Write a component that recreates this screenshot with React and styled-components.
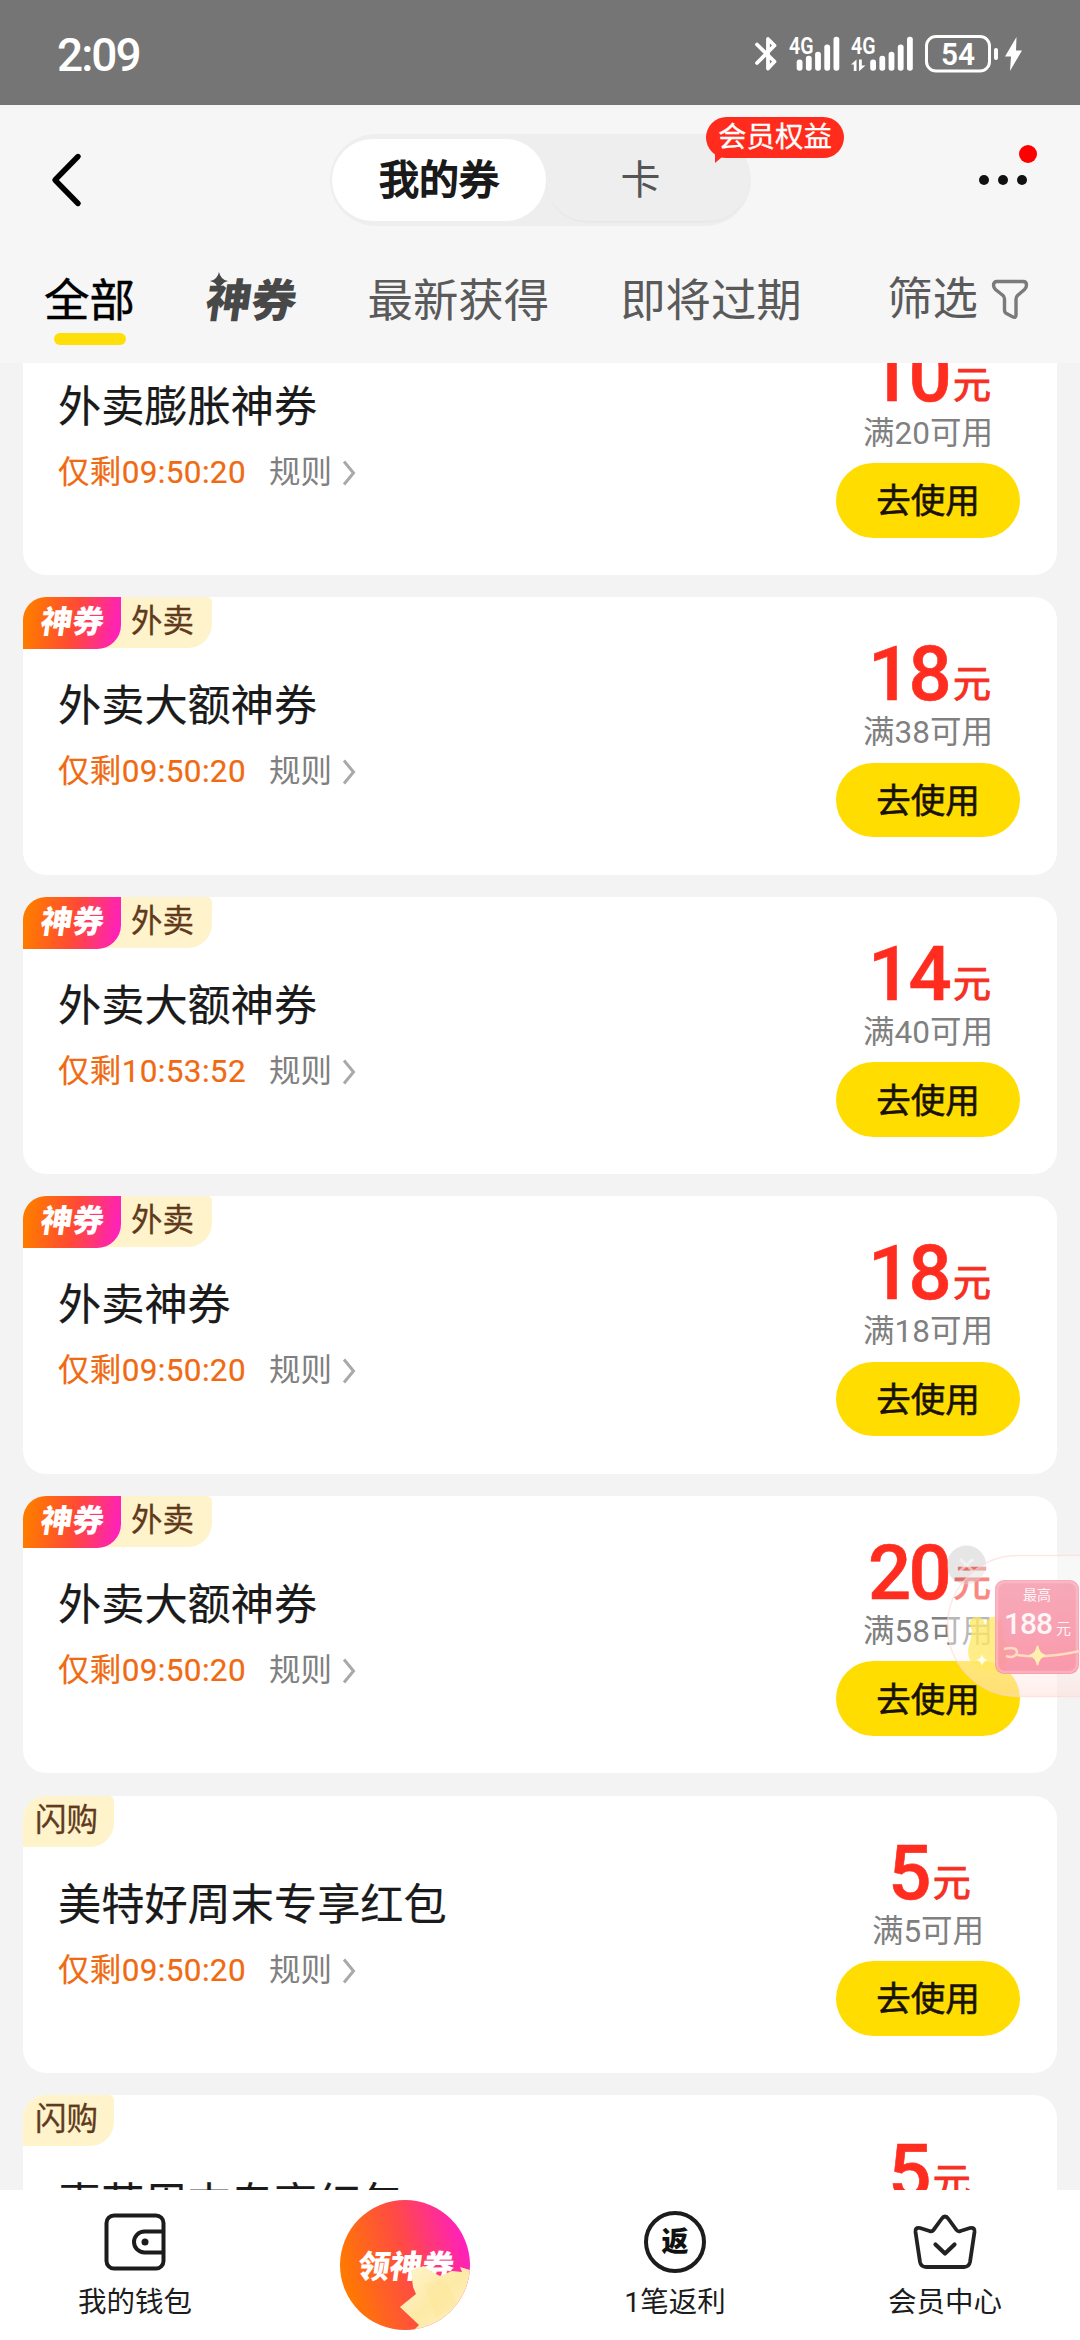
import React from 'react';
import styled, { createGlobalStyle } from 'styled-components';

const coupons = [
    { id: 1, logo: true, tag: '外卖', title: '外卖膨胀神券', left: '09:50:20', price: 10, limit: '满20可用' },
    { id: 2, logo: true, tag: '外卖', title: '外卖大额神券', left: '09:50:20', price: 18, limit: '满38可用' },
    { id: 3, logo: true, tag: '外卖', title: '外卖大额神券', left: '10:53:52', price: 14, limit: '满40可用' },
    { id: 4, logo: true, tag: '外卖', title: '外卖神券', left: '09:50:20', price: 18, limit: '满18可用' },
    { id: 5, logo: true, tag: '外卖', title: '外卖大额神券', left: '09:50:20', price: 20, limit: '满58可用' },
    { id: 6, logo: false, tag: '闪购', title: '美特好周末专享红包', left: '09:50:20', price: 5, limit: '满5可用' },
    { id: 7, logo: false, tag: '闪购', title: '惠苑周末专享红包', left: '09:50:20', price: 5, limit: '满5可用' },
]

const Bluetooth = () => (
    <svg width="22" height="36" viewBox="0 0 22 36" fill="none" stroke="#fff" strokeWidth="3.800" strokeLinecap="round" strokeLinejoin="round">
        <path d="M2 8.500 L19.500 25.500 L13 32.500 V3 L19.500 9.500 L2 27" />
    </svg>
)

const Signal = ({ arrows }) => {
    const shift = arrows ? 11.500 : 0
    const bars = [23.500, 19.700, 15.700, 8.500, 0.700]
    return (
        <svg width={arrows ? 62 : 50} height="36" viewBox={`0 0 ${arrows ? 62 : 50} 36`} fill="#fff">
            <text x="0" y="17.500" fontFamily="Roboto, sans-serif" fontWeight="600" fontSize="23" textLength="24.500" lengthAdjust="spacingAndGlyphs">4G</text>
            {arrows && <path d="M0 28.500 L5.500 23.500 V35 H2.800 V28.500 Z M8 23.500 H10.800 V29.500 H14.500 L8 35.200 Z" />}
            {bars.map((y, i) => (
                <rect key={y} x={7.700 + shift + i * 9.200} y={y} width="5.800" height={34.700 - y} rx="2.700" />
            ))}
        </svg>
    )
}

const Battery = () => (
    <svg width="73" height="38" viewBox="0 0 73 38">
        <rect x="1.500" y="1.500" width="63" height="34.500" rx="9.500" fill="none" stroke="#fff" strokeWidth="3" />
        <rect x="69" y="13" width="4" height="12" rx="2" fill="#fff" />
        <text x="33" y="30" textAnchor="middle" fill="#fff" fontFamily="Roboto, sans-serif" fontWeight="600" fontSize="31.500" textLength="34" lengthAdjust="spacingAndGlyphs">54</text>
    </svg>
)

const Bolt = () => (
    <svg width="17" height="36" viewBox="0 0 17 36" fill="#fff">
        <path d="M11.500 1 L0 20.500 H6 L5 35 L17 14.500 H11 Z" />
    </svg>
)

const Back = () => (
    <svg width="30" height="54" viewBox="0 0 30 54" fill="none" stroke="#000" strokeWidth="5.400" strokeLinecap="round" strokeLinejoin="round">
        <path d="M26 3.500 L3 27 L26 50.500" />
    </svg>
)

const Filter = () => (
    <svg width="38" height="42" viewBox="0 0 38 42" fill="none" stroke="#7a7a7a" strokeWidth="3.400" strokeLinejoin="round">
        <path d="M6 2.500 H32 Q35.500 2.500 35.500 6 Q35.500 8.500 33.500 10.500 L26.500 16.500 Q25 18 25 20 V36 Q25 39 22 38 L15.500 34.500 Q13.500 33.500 13.500 31 V20 Q13.500 18 12 16.500 L4.500 10.500 Q2.500 8.500 2.500 6 Q2.500 2.500 6 2.500 Z" />
    </svg>
)

const Chevron = () => (
    <svg width="14" height="26" viewBox="0 0 14 26" fill="none" stroke="#a9a9a9" strokeWidth="3">
        <path d="M1 1.500 L10.500 13 L1 24.500" />
    </svg>
)

const Wallet = () => (
    <svg width="62" height="58" viewBox="0 0 62 58" fill="none" stroke="#1c1c1c" strokeWidth="4">
        <rect x="2.500" y="2.500" width="57" height="53" rx="7.500" />
        <path d="M59 18.500 H40.500 A10.500 10.500 0 0 0 40.500 39.500 H59" />
        <circle cx="41" cy="29" r="3.500" fill="#1c1c1c" stroke="none" />
    </svg>
)

const Crown = () => (
    <svg width="64" height="56" viewBox="0 0 64 56" fill="none" stroke="#222" strokeWidth="3.800" strokeLinejoin="round" strokeLinecap="round">
        <path d="M28.500 5 Q32 0 35.500 5 L43.500 16 Q45 18 47.500 17 L57 14 Q62 13 61.500 18 L57 48 Q56 53 51 53 H13 Q8 53 7 48 L2.500 18 Q2 13 7 14 L16.500 17 Q19 18 20.500 16 Z" />
        <path d="M22.500 30.500 L32 39.500 L41.500 30.500" strokeWidth="4.200" />
    </svg>
)

// cream ticket torn over the bottom right of the round button
const Ticket = () => (
    <svg width="130" height="130" viewBox="0 0 130 130">
        <defs>
            <linearGradient id="paper" x1="0" y1="0" x2="1" y2="1">
                <stop offset="0" stopColor="#fff6d2" />
                <stop offset=".5" stopColor="#fdeaa6" />
                <stop offset="1" stopColor="#fff3c4" />
            </linearGradient>
        </defs>
        <path d="M71 70 L84 66 L92 72 L100 76 L112 71 L122 72 L120 67 L130 70 V130 H74 L79 125 L60 107 L76 94 L73 87 Z" fill="url(#paper)" />
        <path d="M84 84 L104 78 L118 104 L96 118 Z" fill="#fbe496" opacity=".35" />
    </svg>
)

const FloatArt = () => (
    <svg width="134" height="164" viewBox="0 0 134 164">
        <defs>
            <linearGradient id="gift" x1="0" y1="0" x2="0" y2="1">
                <stop offset="0" stopColor="#f6a0b1" />
                <stop offset="1" stopColor="#f98fa3" />
            </linearGradient>
            <linearGradient id="shell" x1="0" y1="0" x2="0" y2="1">
                <stop offset="0" stopColor="#fff" stopOpacity=".4" />
                <stop offset=".6" stopColor="#fff" stopOpacity=".45" />
                <stop offset="1" stopColor="#ffe0da" stopOpacity=".55" />
            </linearGradient>
        </defs>
        <circle cx="20.500" cy="29" r="19.500" fill="#c4c4c4" opacity=".42" />
        <path d="M14 23 L27 35 M27 23 L14 35" stroke="#fff" strokeWidth="3" opacity=".5" />
        <path d="M140 19.500 H72 A70.500 70.500 0 0 0 72 160.500 H140 Z" fill="url(#shell)" stroke="#fbd9d5" strokeWidth="1.500" strokeOpacity=".6" />
        <path d="M26 95 Q20 82 30 81 Q38 80 39 90 Q42 79 50 81 Q61 85 56 101 Q68 118 58 130 Q47 139 31 132 Q18 122 24 106 Z" fill="#ffe860" opacity=".75" />
        <rect x="49" y="44" width="84" height="94" rx="9" fill="url(#gift)" opacity=".9" />
        <rect x="51" y="46" width="80" height="90" rx="8" fill="none" stroke="#ffc6d0" strokeWidth="2.500" opacity=".5" />
        <path d="M58 113 Q72 110 71 117 Q68 123 60 120 M71 119 Q98 123 134 115" fill="none" stroke="#ffdcc0" strokeWidth="2.500" />
        <path d="M91.500 110 Q93 118 99 119.500 Q93 121 91.500 129 Q90 121 84 119.500 Q90 118 91.500 110 Z" fill="#fff0b0" stroke="#fff0b0" strokeWidth="1.500" />
        <path d="M36 118 Q37 123 42 124 Q37 125 36 130 Q35 125 30 124 Q35 123 36 118 Z" fill="#fff" opacity=".85" />
    </svg>
)

const App = () => {
    return (
        <Screen>
            <GlobalStyle />
            <StatusBar>
                <Clock>2:09</Clock>
                <StatusIcons>
                    <Bluetooth />
                    <Signal />
                    <Signal arrows />
                    <BatteryGroup>
                        <Battery />
                        <Bolt />
                    </BatteryGroup>
                </StatusIcons>
            </StatusBar>

            <Header>
                <NavRow>
                    <Back />
                    <Segmented>
                        <Segment $active>我的券</Segment>
                        <Segment>卡</Segment>
                        <Bubble>会员权益</Bubble>
                    </Segmented>
                    <More>
                        <i /><i /><i />
                        <RedDot />
                    </More>
                </NavRow>
                <Tabs>
                    <Tab $active>全部</Tab>
                    <LogoTab>
                        <Star viewBox="0 0 18 18"><path d="M9 0 Q10.500 7.500 18 9 Q10.500 10.500 9 18 Q7.500 10.500 0 9 Q7.500 7.500 9 0 Z" /></Star>
                        <Slanted>神券</Slanted>
                    </LogoTab>
                    <Tab>最新获得</Tab>
                    <Tab>即将过期</Tab>
                    <FilterTab>筛选<Filter /></FilterTab>
                </Tabs>
            </Header>

            <List>
                {coupons.map((item) => (
                    <Card key={item.id}>
                        <Info>
                            <Tags>
                                {item.logo && <LogoTag><Slanted>神券</Slanted></LogoTag>}
                                <Tag $first={!item.logo}>{item.tag}</Tag>
                            </Tags>
                            <Title>{item.title}</Title>
                            <Meta>
                                <Countdown>仅剩{item.left}</Countdown>
                                <Rule>规则<Chevron /></Rule>
                            </Meta>
                        </Info>
                        <Side>
                            <Price>{item.price}<span>元</span></Price>
                            <Limit>{item.limit}</Limit>
                            <UseButton>去使用</UseButton>
                        </Side>
                    </Card>
                ))}
            </List>

            <BottomBar>
                <BottomItem>
                    <IconBox><Wallet /></IconBox>
                    我的钱包
                </BottomItem>
                <BottomItem>
                    <Round>
                        <RoundText><Slanted>领神券</Slanted></RoundText>
                        <Ticket />
                    </Round>
                </BottomItem>
                <BottomItem>
                    <IconBox><Refund>返</Refund></IconBox>
                    1笔返利
                </BottomItem>
                <BottomItem>
                    <IconBox><Crown /></IconBox>
                    会员中心
                </BottomItem>
            </BottomBar>

            <Floating>
                <FloatArt />
                <FloatText>
                    <small>最高</small>
                    <p>188<span>元</span></p>
                </FloatText>
            </Floating>
        </Screen>
    );
}

export default App;

const GlobalStyle = createGlobalStyle`
    * {
        box-sizing: border-box;
    }
    body {
        margin: 0;
        font-family: Roboto, "Noto Sans CJK SC", sans-serif;
    }
    svg {
        display: block;
        flex-shrink: 0;
        overflow: visible;
    }
`;

const Screen = styled.div`
    position: relative;
    display: flex;
    flex-direction: column;
    width: 1080px;
    height: 2340px;
    overflow: hidden;
    background: #f3f3f3;
`;

const StatusBar = styled.div`
    display: flex;
    align-items: center;
    justify-content: space-between;
    height: 105px;
    flex-shrink: 0;
    padding: 3px 58px 0 57px;
    background: #757575;
`;

const Clock = styled.div`
    padding-top: 1px;
    color: #fff;
    font-size: 46px;
    font-weight: 500;
    letter-spacing: -2px;
`;

const StatusIcons = styled.div`
    display: flex;
    align-items: center;
    gap: 12px;
`;

const BatteryGroup = styled.div`
    display: flex;
    align-items: center;
    gap: 7px;
`;

const Header = styled.div`
    height: 258px;
    flex-shrink: 0;
    background: #f6f6f6;
`;

const NavRow = styled.div`
    display: grid;
    grid-template-columns: 278px 421px 1fr;
    align-items: center;
    height: 150px;
    padding: 0 53px 0 52px;
`;

const Segmented = styled.div`
    position: relative;
    display: flex;
    align-items: center;
    height: 92px;
    padding: 0 2px;
    border-radius: 46px;
    background: #eee;
`;

const Segment = styled.div`
    display: flex;
    align-items: center;
    justify-content: center;
    width: ${(props) => (props.$active ? '214px' : '203px')};
    height: 82px;
    padding-bottom: 6px;
    padding-right: ${(props) => (props.$active ? '0' : '14px')};
    border-radius: 41px;
    background: ${(props) => (props.$active ? '#fff' : 'transparent')};
    box-shadow: ${(props) => (props.$active ? 'none' : '0 2px 2px -1px #e4e4e4')};
    color: ${(props) => (props.$active ? '#1a1a1a' : '#555')};
    font-size: 40px;
    -webkit-text-stroke: ${(props) => (props.$active ? '1.8px #1a1a1a' : '0')};
`;

const Bubble = styled.div`
    position: absolute;
    left: 376px;
    top: -17px;
    width: 138px;
    height: 41px;
    border-radius: 21px;
    background: #ff2b1c;
    color: #fff;
    font-size: 28.5px;
    font-weight: 400;
    -webkit-text-stroke: 0.3px #fff;
    line-height: 41px;
    text-align: center;
    white-space: nowrap;
    &::after {
        content: '';
        position: absolute;
        left: 9px;
        bottom: -5px;
        border-style: solid;
        border-width: 12px 14px 0 0;
        border-color: #ff2b1c transparent transparent;
    }
`;

const More = styled.div`
    position: relative;
    display: flex;
    justify-content: flex-end;
    gap: 9px;
    i {
        width: 10px;
        height: 10px;
        border-radius: 50%;
        background: #111;
    }
`;

const RedDot = styled.div`
    position: absolute;
    right: -10px;
    top: -30px;
    width: 18px;
    height: 18px;
    border-radius: 50%;
    background: #ff0000;
`;

const Tabs = styled.div`
    display: flex;
    align-items: flex-start;
    gap: 71px;
    height: 108px;
    padding: 0 51px 0 44px;
`;

const Tab = styled.div`
    position: relative;
    height: 90px;
    line-height: 94px;
    color: ${(props) => (props.$active ? '#000' : '#5a5a5a')};
    font-size: 45.4px;
    -webkit-text-stroke: ${(props) => (props.$active ? '0.5px #000' : '0')};
    white-space: nowrap;
    &::after {
        content: '';
        display: ${(props) => (props.$active ? 'block' : 'none')};
        position: absolute;
        left: 10px;
        bottom: 0;
        width: 72px;
        height: 12px;
        border-radius: 6px;
        background: #ffdf0a;
    }
`;

const Slanted = styled.span`
    display: inline-block;
    transform: skewX(-8deg);
`;

const LogoTab = styled(Tab)`
    color: #484848;
    font-size: 45.400px;
    font-weight: 900;
`;

const Star = styled.svg`
    position: absolute;
    left: 4px;
    top: 17px;
    width: 18px;
    height: 18px;
    fill: #484848;
`;

const FilterTab = styled(Tab)`
    display: flex;
    align-items: center;
    gap: 13px;
    margin-left: auto;
`;

const List = styled.div`
    flex: 1;
    min-height: 0;
    overflow: hidden;
    padding: 0 23px;
    > :first-child {
        margin-top: -65.4px;
    }
`;

const Card = styled.div`
    display: flex;
    justify-content: space-between;
    height: 277.4px;
    margin-bottom: 22.2px;
    border-radius: 23px;
    background: #fff;
`;

const Info = styled.div`
    display: flex;
    flex-direction: column;
`;

const Tags = styled.div`
    display: flex;
    height: 52px;
    margin-bottom: 27px;
`;

const LogoTag = styled.div`
    z-index: 1;
    width: 98px;
    height: 52px;
    padding-left: 18px;
    border-radius: 23px 0 24px 0;
    background: linear-gradient(100deg, #ff7a00 8%, #ff4a35 52%, #ff1fc0 96%);
    color: #fff;
    font-size: 31.500px;
    font-weight: 900;
    line-height: 52px;
`;

const Tag = styled.div`
    width: ${(props) => (props.$first ? '91px' : '115px')};
    height: 51px;
    margin-left: ${(props) => (props.$first ? '0' : '-24px')};
    padding-left: ${(props) => (props.$first ? '12px' : '34px')};
    border-radius: ${(props) => (props.$first ? '23px' : '0')} 5px 24px 0;
    background: #fff3cc;
    color: #5f3a1c;
    font-size: 31.500px;
    line-height: 50px;
    -webkit-text-stroke: 0.3px #5f3a1c;
`;

const Title = styled.div`
    height: 60px;
    padding-left: 35px;
    color: #1a1a1a;
    font-size: 43.200px;
    line-height: 61px;
    white-space: nowrap;
    -webkit-text-stroke: 0.2px #1a1a1a;
`;

const Meta = styled.div`
    display: flex;
    align-items: center;
    height: 40px;
    margin-top: 16px;
    padding-left: 35px;
    font-size: 31.500px;
    line-height: 40px;
`;

const Countdown = styled.div`
    width: 211px;
    color: #f06a12;
    letter-spacing: 0.35px;
    -webkit-text-stroke: 0.2px #f06a12;
`;

const Rule = styled.div`
    display: flex;
    align-items: center;
    gap: 11px;
    color: #808080;
`;

const Side = styled.div`
    display: flex;
    flex-direction: column;
    align-items: center;
    width: 184px;
    margin-right: 37px;
    padding-top: 31px;
`;

const Price = styled.div`
    display: flex;
    align-items: baseline;
    height: 84px;
    line-height: 92px;
    padding-left: 3px;
    color: #ff2d1f;
    font-size: 76px;
    font-weight: 500;
    letter-spacing: -2.8px;
    white-space: nowrap;
    -webkit-text-stroke: 0.6px #ff2d1f;
    span {
        margin-left: 4px;
        padding-bottom: 3px;
        position: relative;
        top: -3px;
        font-size: 38px;
        font-weight: 400;
        line-height: 40px;
        letter-spacing: 0;
        -webkit-text-stroke: 1px #ee3328;
    }
`;

const Limit = styled.div`
    height: 50.500px;
    line-height: 41px;
    color: #808080;
    font-size: 31.500px;
    white-space: nowrap;
`;

const UseButton = styled.button`
    width: 184px;
    height: 74.500px;
    padding: 0 0 4px;
    border: none;
    border-radius: 38px;
    background: #ffdd00;
    color: #1a1200;
    font-family: inherit;
    font-size: 34.500px;
    -webkit-text-stroke: 0.6px #1a1200;
`;

const BottomBar = styled.div`
    display: grid;
    grid-template-columns: repeat(4, 1fr);
    height: 150px;
    flex-shrink: 0;
    background: #fff;
`;

const BottomItem = styled.div`
    display: flex;
    flex-direction: column;
    align-items: center;
    padding-top: 10px;
    color: #1c1c1c;
    font-size: 28.500px;
    line-height: 40px;
`;

const IconBox = styled.div`
    display: flex;
    align-items: center;
    justify-content: center;
    height: 83px;
`;

const Refund = styled.div`
    width: 62px;
    height: 62px;
    border: 4px solid #1c1c1c;
    border-radius: 50%;
    color: #111;
    font-size: 27px;
    font-weight: 900;
    line-height: 54px;
    text-align: center;
`;

const Round = styled.div`
    position: relative;
    width: 130px;
    height: 130px;
    border-radius: 50%;
    overflow: hidden;
    background: linear-gradient(75deg, #ff7a00 10%, #ff4a45 52%, #ff1fc0 92%);
    svg {
        position: absolute;
        inset: 0;
    }
`;

const RoundText = styled.div`
    padding: 47px 0 0 18px;
    color: #fff;
    font-size: 32px;
    font-weight: 900;
    white-space: nowrap;
`;

const Floating = styled.div`
    position: absolute;
    left: 946px;
    top: 1536px;
    width: 134px;
    height: 164px;
`;

const FloatText = styled.div`
    position: absolute;
    left: 49px;
    top: 44px;
    width: 84px;
    color: #fff;
    opacity: 0.9;
    text-align: center;
    small {
        display: block;
        margin-top: 4px;
        font-size: 14px;
        line-height: 23px;
    }
    p {
        margin: 0;
        font-size: 30px;
        font-weight: 500;
        line-height: 34px;
        letter-spacing: -1px;
        white-space: nowrap;
    }
    span {
        margin-left: 4px;
        font-size: 15px;
        font-weight: 400;
    }
`;
